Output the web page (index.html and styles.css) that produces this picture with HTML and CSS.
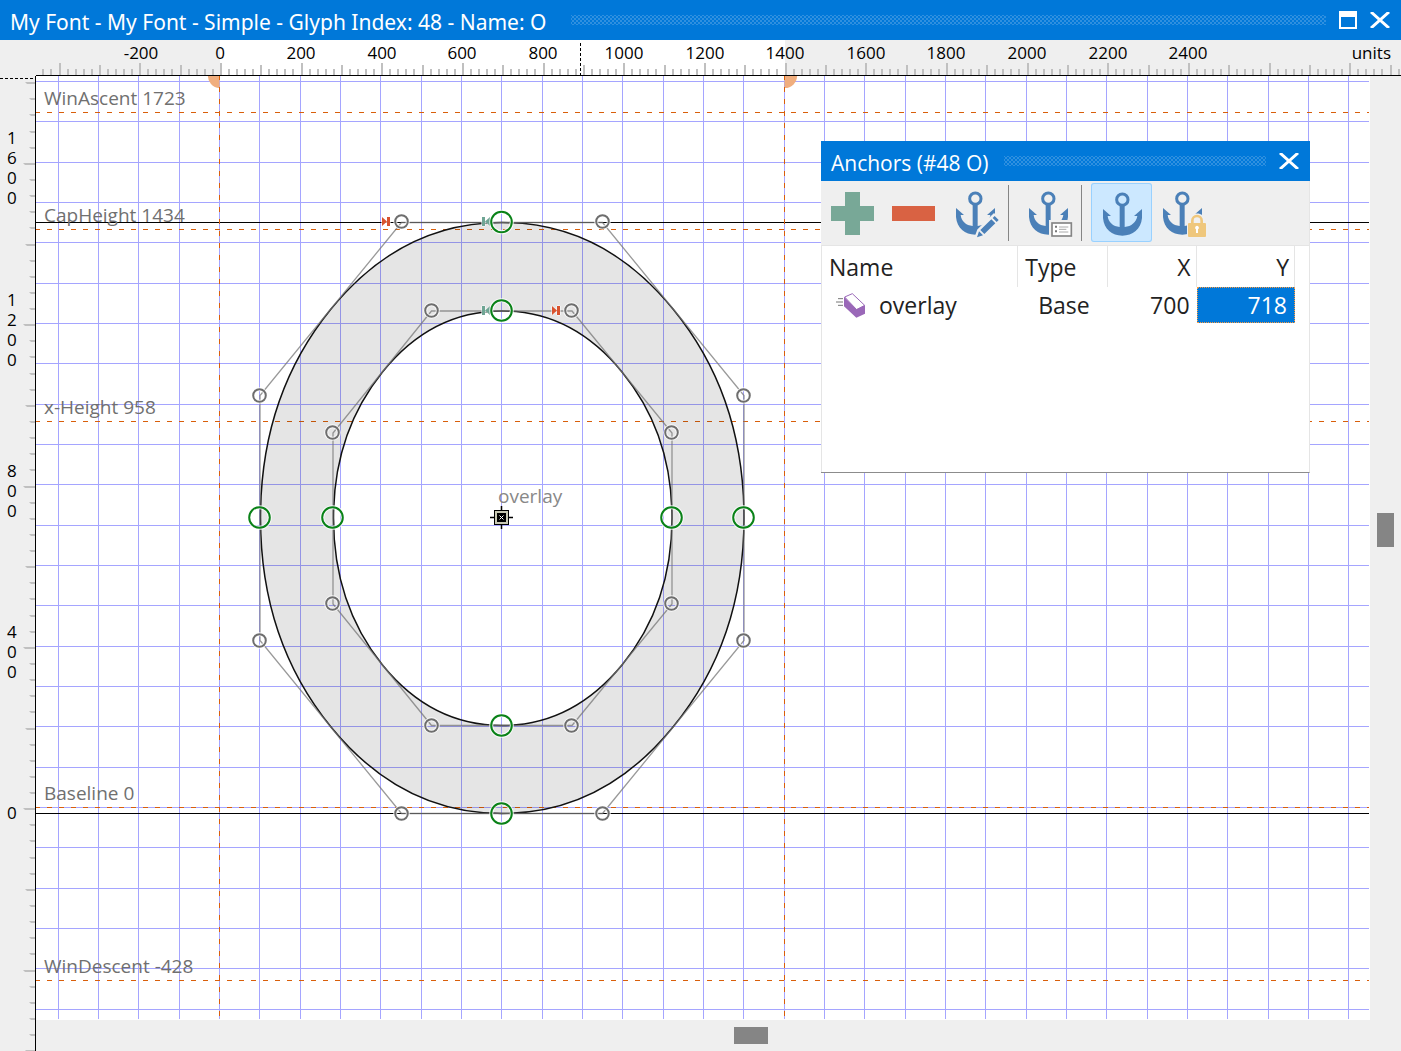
FILE: index.html
```html
<!DOCTYPE html>
<html lang="en">
<head>
<meta charset="utf-8">
<title>My Font - My Font - Simple - Glyph Index: 48 - Name: O</title>
<link rel="stylesheet" href="styles.css">
</head>
<body>
<main class="window">
  <header class="titlebar main-title">
    <h1 class="title">My Font - My Font - Simple - Glyph Index: 48 - Name: O</h1>
    <span class="grip"></span>
    <button class="winbtn" aria-label="Maximize"><svg width="18" height="18"><path d="M0 0H18V18H0ZM2 6V16H16V6Z" fill="#fff" fill-rule="evenodd"/></svg></button>
    <button class="winbtn" aria-label="Close"><svg width="20" height="16"><path d="M1 0L19 16M19 0L1 16" stroke="#fff" stroke-width="3"/></svg></button>
  </header>

  <div class="ruler-top">
    <svg class="fill">
      <rect x="220" y="0" width="565" height="35" fill="#fff"/>
      <path id="ticks-top" fill="#c0c0c0"/>
      <path d="M580.5 3V35" stroke="#000" stroke-dasharray="3 2"/>
      <g class="ruler-text" text-anchor="middle">
        <text x="141" y="19">-200</text><text x="220" y="19">0</text><text x="301" y="19">200</text><text x="382" y="19">400</text><text x="462" y="19">600</text><text x="543" y="19">800</text><text x="624" y="19">1000</text><text x="705" y="19">1200</text><text x="785" y="19">1400</text><text x="866" y="19">1600</text><text x="946" y="19">1800</text><text x="1027" y="19">2000</text><text x="1108" y="19">2200</text><text x="1188" y="19">2400</text>
      </g>
    </svg>
    <span class="units">units</span>
  </div>

  <div class="workspace">
    <div class="ruler-left">
      <svg class="fill">
        <path id="ticks-left" fill="#c0c0c0"/>
        <path d="M0 2.5H35" stroke="#000" stroke-dasharray="3 2"/>
      </svg>
      <span class="mark" style="top:52px">1600</span>
      <span class="mark" style="top:214px">1200</span>
      <span class="mark" style="top:385px">800</span>
      <span class="mark" style="top:546px">400</span>
      <span class="mark" style="top:727px">0</span>
    </div>

    <div class="canvas">
      <svg class="fill" id="canvas">
        <g transform="translate(-36 -76)">
          <path id="grid" fill="#a5a5ff"/>
          <g fill="#f0ae7e"><path d="M219.5 75V88A12 12 0 0 1 208 75Z"/><path d="M784.5 75V88A12 12 0 0 0 797 75Z"/></g>
          <path id="guides-solid" stroke="#000"/>
          <path id="guides" stroke="#d95f0a" stroke-dasharray="5 7"/>
          <g class="guide-text">
            <text x="44" y="105">WinAscent 1723</text>
            <text x="44" y="222">CapHeight 1434</text>
            <text x="44" y="414">x-Height 958</text>
            <text x="44" y="800">Baseline 0</text>
            <text x="44" y="973">WinDescent -428</text>
          </g>
          <path fill="#000" fill-opacity=".1" stroke="#111" stroke-width="1.500" fill-rule="evenodd" d="M502 222.500Q401.500 222.500 331 309Q260.500 395.500 260.500 518Q260.500 640.500 331 727Q401.500 813.500 502 813.500Q602.500 813.500 673 727Q744 640.500 744 518Q744 395.500 673 309Q602.500 222.500 502 222.500ZM502 311Q431.500 311 382.500 372Q333.500 433 333.500 518Q333.500 604 382.500 665Q431.500 725.500 502 725.500Q572 725.500 622 665Q672 604 672 518Q672 433 622 372Q572 311 502 311Z"/>
          <path fill="none" stroke="#777" stroke-opacity=".75" stroke-width="1.300" d="M401.500 222.500H602.500L744 395.500V640.500L602.500 813.500H401.500L260 640.500V395.500ZM431.500 311H572L672 433V604L572 725.500H431.500L333 604V433Z"/>
          <g fill="#d9532f" stroke="#fff" paint-order="stroke"><path d="M382 217L387 221.500V217H390V226H387V221.500L382 226Z"/><path d="M552 306L557 310.500V306H560V315H557V310.500L552 315Z"/></g>
          <g fill="#6fa594" stroke="#fff" paint-order="stroke"><path d="M490 217L485 221.500V217H482V226H485V221.500L490 226Z"/><path d="M490 306L485 310.500V306H482V315H485V310.500L490 315Z"/></g>
          <g id="handles" fill="none"></g>
          <g class="anchor-mark">
            <path d="M490 517.500H513M501.500 506V529" stroke="#000" stroke-width="1.500"/>
            <rect x="494.500" y="510.500" width="14" height="14" fill="#c9c9b4" stroke="#000"/>
            <rect x="497" y="513" width="9" height="9"/>
            <path d="M499.500 515.500L503.500 519.500M503.500 515.500L499.500 519.500" stroke="#fff"/>
            <text class="anchor-text" x="498" y="503">overlay</text>
          </g>
        </g>
      </svg>

      <section class="panel" aria-label="Anchors">
        <header class="titlebar">
          <h2 class="title">Anchors (#48 O)</h2>
          <span class="grip"></span>
          <button class="winbtn" aria-label="Close"><svg width="20" height="16"><path d="M1 0L19 16M19 0L1 16" stroke="#fff" stroke-width="3"/></svg></button>
        </header>
        <svg class="defs" width="0" height="0"><defs>
          <g id="anchor" fill="#4b80b8"><circle cx="94" cy="50" r="17" fill="none" stroke="#4b80b8" stroke-width="9"/><path d="M86 69H101V132C121 130 136 118 139 99H129L153 78V105C150 138 125 158 94 158C63 158 39 138 36 105V78L60 99H50C52 118 66 130 86 132Z"/></g>
        </defs></svg>
        <div class="toolbar">
          <button class="tool" aria-label="Add"><svg viewBox="0 0 61 59"><path d="M23 9H38V23H52V38H38V52H23V38H9V23H23Z" fill="#78a897"/></svg></button>
          <button class="tool" aria-label="Remove"><svg viewBox="0 0 61 59"><path d="M9 23H52V38H9Z" fill="#d96243"/></svg></button>
          <button class="tool" aria-label="Edit anchor"><svg viewBox="0 0 183 177"><use href="#anchor" y="-3"/><path d="M99 163L106 143L150 100L164 114L120 157Z" fill="#f0f0f0" stroke="#f0f0f0" stroke-width="14"/><path d="M99 163L105 145L117 157ZM109 141L142 109L154 121L121 153ZM146 105L152 99L164 111L158 117Z" fill="#4b80b8"/></svg></button>
          <span class="separator"></span>
          <button class="tool" aria-label="Anchor properties"><svg viewBox="0 0 183 177"><use href="#anchor" y="-3"/><path d="M96 111H172V170H96Z" fill="#f0f0f0"/><rect x="105" y="120" width="58" height="39" fill="#fff" stroke="#858585" stroke-width="5"/><path d="M114 131H120M114 145H120" stroke="#777" stroke-width="6"/><path d="M126 132H154M126 139H148M126 147H154" stroke="#aaa" stroke-width="3"/></svg></button>
          <span class="separator"></span>
          <button class="tool active" aria-label="Show anchors" aria-pressed="true"><svg viewBox="0 0 183 177"><use href="#anchor"/></svg></button>
          <button class="tool" aria-label="Lock anchors"><svg viewBox="0 0 183 177"><use href="#anchor" y="-3"/><path d="M108 115H114C114 84 162 84 162 115H170V166H108Z" fill="#f0f0f0"/><path d="M124 122V113A14 14 0 0 1 152 113V122" fill="none" stroke="#efc77c" stroke-width="8"/><rect x="111" y="120" width="54" height="42" rx="3" fill="#efc77c"/><path d="M138 128A6 6 0 0 1 141 139V150H135V139A6 6 0 0 1 138 128Z" fill="#fff"/></svg></button>
        </div>
        <table class="anchors">
          <colgroup><col class="c-name"><col class="c-type"><col class="c-x"><col class="c-y"><col></colgroup>
          <thead><tr><th>Name</th><th>Type</th><th class="num">X</th><th class="num">Y</th><th class="rest"></th></tr></thead>
          <tbody><tr>
            <td><span class="name"><svg width="30" height="25" viewBox="0 0 90 75"><path d="M6 17H21M0 27H21M6 37H21" stroke="#777" stroke-width="3"/><path d="M26 12L49 2L86 37L62 50Z" fill="#fff" stroke="#9a68b8" stroke-width="3"/><path d="M24 11L61 49L87 37V62L61 74L24 40Z" fill="#9a68b8"/></svg>overlay</span></td>
            <td class="type">Base</td><td class="num">700</td><td class="num selected">718</td><td></td>
          </tr></tbody>
        </table>
      </section>
    </div>

    <div class="scroll-v"><span class="thumb"></span></div>
    <div class="scroll-h"><span class="thumb"></span></div>
  </div>
</main>
<script src="editor.js"></script>
</body>
</html>
```
FILE: styles.css
```css
* { box-sizing: border-box; }
html, body { height: 100%; margin: 0; }
body { font-family: "Open Sans", "Noto Sans", sans-serif; color: #222; background: #efefef; overflow: hidden; }
button { padding: 0; border: 0; background: none; font: inherit; display: flex; align-items: center; justify-content: center; }
svg { display: block; }
.fill { width: 100%; height: 100%; }
.defs { position: absolute; }

.window { height: 100%; display: flex; flex-direction: column; }
.titlebar { height: 40px; flex: none; display: flex; align-items: center; gap: 13px; padding: 0 11px; background: #0078d9; color: #fff; }
.title { margin: 0; font-size: 21px; line-height: 40px; font-weight: 400; white-space: nowrap; padding-top: 3px; }
.main-title { padding-left: 10px; }
.main-title .title { font-family: "Noto Sans", "Open Sans", sans-serif; }
.grip { flex: 1; height: 10px; margin-left: 2px; background-image: radial-gradient(#2f90e0 1px, transparent 1px), radial-gradient(#2f90e0 1px, transparent 1px); background-size: 4px 4px; background-position: 0 0, 2px 2px; }
.main-title .grip { margin-left: 12px; }

.ruler-top { height: 36px; flex: none; position: relative; background: linear-gradient(#000, #000) 36px 35px / 100% 1px no-repeat; }
.ruler-text { font-size: 17px; fill: #000; }
.units { position: absolute; right: 10px; top: 1px; font-size: 17px; line-height: 24px; color: #000; }

.workspace { flex: 1; min-height: 0; display: grid; grid-template: 1fr 31px / 36px 1fr 31px; }
.ruler-left { grid-row: 1 / 3; position: relative; border-right: 1px solid #000; }
.mark { position: absolute; left: 7px; width: 10px; font-size: 17px; line-height: 20px; color: #000; word-break: break-all; }
.canvas { position: relative; min-width: 0; min-height: 0; background: #fff; }
.canvas > .fill { position: absolute; }
.guide-text { font-size: 19px; fill: #707070; }
.anchor-text { font-size: 19px; fill: #888; }
.scroll-v { display: grid; grid-template-rows: 437fr 34px 473fr; }
.scroll-v .thumb { grid-row: 2; width: 17px; margin-left: 7px; background: #858585; }
.scroll-h { grid-column: 2; display: grid; grid-template-columns: 698fr 34px 602fr; }
.scroll-h .thumb { grid-column: 2; height: 17px; margin-top: 7px; background: #858585; }

.panel { position: absolute; left: 785px; top: 65px; width: 489px; height: 332px; display: flex; flex-direction: column; background: #fff; border-right: 1px solid #e5e5e5; border-bottom: 1px solid #8c8c8c; }
.panel .titlebar { padding: 0 11px 0 10px; margin-right: -1px; }
.toolbar { height: 65px; flex: none; display: flex; padding: 2px 1px; background: #efefef; border-bottom: 1px solid #e5e5e5; }
.tool { width: 61px; height: 59px; border-radius: 3px; }
.tool svg { width: 61px; height: 59px; flex: none; }
.tool.active { background: #cce8ff; box-shadow: inset 0 0 0 1px #99d1ff; }
.separator { width: 1px; height: 56px; margin: 2px 8px 0 3px; background: #858585; }
.toolbar .active { margin-left: 1px; margin-right: -1px; }
.anchors { width: 100%; flex: 1; border-left: 1px solid #e5e5e5; display: block; border-spacing: 0; table-layout: fixed; font-size: 23px; line-height: 33px; }
.anchors th, .anchors td { padding: 0 7px; text-align: left; font-weight: 400; white-space: nowrap; }
.anchors th { height: 41px; padding: 2px 6px 0 7px; border-right: 1px solid #e5e5e5; }
.anchors th.num { padding-right: 5px; }
.anchors th.rest { border: 0; }
.anchors td { height: 36px; padding-top: 1px; }
.c-name { width: 197px; } .c-type { width: 90px; } .c-x { width: 89px; } .c-y { width: 99px; }
.anchors .num { text-align: right; }
.anchors .type { padding-left: 20px; }
.anchors .selected { background: #0078d9; color: #fff; border: 1px dotted #ff9a3c; }
.name { display: flex; align-items: center; gap: 13px; padding-left: 7px; }
```
FILE: editor.js
```js
const byId = id => document.getElementById(id);
const STEP = 121 / 3; // pixels per 100 font units

function draw() {
  const area = byId('canvas').getBoundingClientRect();
  const right = Math.floor(area.right) - 1;
  const bottom = Math.floor(area.bottom) - 1;

  let grid = '';
  for (let k = -4; ; k++) {
    const x = Math.floor(219.34 + STEP * k);
    if (x > right) break;
    grid += `M${x} 76h1V${bottom}h-1Z`;
  }
  for (let k = -18; ; k++) {
    const y = Math.floor(807.34 + STEP * k);
    if (y > bottom) break;
    grid += `M36 ${y}H${right}v1H36Z`;
  }
  byId('grid').setAttribute('d', grid);
  byId('guides-solid').setAttribute('d', [222, 813].map(y => `M36 ${y}.5H${right}`).join(''));
  byId('guides').setAttribute('d',
    [112, 229, 421, 807, 980].map(y => `M35 ${y}.5H${right}`).join('') +
    [219, 784].map(x => `M${x}.5 75V${bottom}`).join(''));

  // Horizontal ruler: a tick every 20 units
  let ticks = '';
  for (let k = -22; ; k++) {
    const x = Math.floor(220.34 + STEP * k / 5);
    if (x > innerWidth) break;
    const h = k % 10 === 0 ? 12 : k % 5 === 0 ? 10 : 6;
    if (x >= 36) ticks += `M${x} ${35 - h}h2v${h}h-2Z`;
  }
  byId('ticks-top').setAttribute('d', ticks);

  // Vertical ruler: a tick every 40 units
  ticks = '';
  for (let k = -45; ; k++) {
    const y = Math.floor(732.67 + STEP * k * 0.4);
    if (y > innerHeight) break;
    const w = k % 10 === 0 ? 12 : k % 5 === 0 ? 10 : 6;
    if (y >= 0) ticks += `M${35 - w} ${y}h${w}v2h${2 - w}Z`;
  }
  byId('ticks-left').setAttribute('d', ticks);
}

const onCurve = [[501.5, 222], [501.5, 310.5], [259.5, 517.5], [332.5, 517.5], [671.5, 517.5], [743.5, 517.5], [501.5, 725.5], [501.5, 813.5]];
const offCurve = [[401.5, 221.5], [602.5, 221.5], [431.5, 310.5], [571.5, 310.5], [259.5, 395.5], [743.5, 395.5], [332.5, 432.5], [671.5, 432.5],
  [332.5, 603.5], [671.5, 603.5], [259.5, 640.5], [743.5, 640.5], [431.5, 725.5], [571.5, 725.5], [401.5, 813.5], [602.5, 813.5]];
const ring = (r, color) => ([x, y]) =>
  `<circle cx="${x}" cy="${y}" r="${r}" stroke="#fff" stroke-opacity=".8" stroke-width="4"/>` +
  `<circle cx="${x}" cy="${y}" r="${r}" stroke="${color}" stroke-width="2"/>`;
byId('handles').innerHTML = offCurve.map(ring(6.3, '#6e6e6e')).join('') + onCurve.map(ring(10.3, '#0a8218')).join('');

draw();
addEventListener('resize', draw);
```
